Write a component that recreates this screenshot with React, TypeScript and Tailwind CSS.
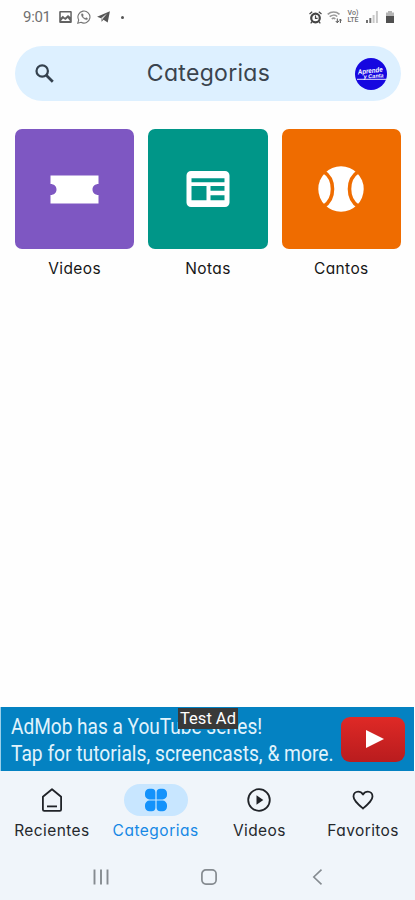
import type { ReactNode } from "react";

const categories = [
  { name: "Videos", color: "bg-[#7e57c2]", icon: <TicketIcon /> },
  { name: "Notas", color: "bg-[#009688]", icon: <NewsIcon /> },
  { name: "Cantos", color: "bg-[#ef6c00]", icon: <BallIcon /> },
];

const tabs = [
  { name: "Recientes", icon: <HomeIcon />, spacing: "tracking-[0.4px]" },
  { name: "Categorias", icon: <GridIcon />, spacing: "tracking-[0.5px]", active: true },
  { name: "Videos", icon: <PlayIcon />, spacing: "tracking-[0.4px]" },
  { name: "Favoritos", icon: <HeartIcon />, spacing: "tracking-[0.4px]" },
];

function TicketIcon() {
  return (
    <svg className="h-[29px] w-[49px]" viewBox="0 0 49 29" fill="#fff">
      <path d="M.5.5h48v8.500c-3.500 0-6 2.200-6 5.500s2.500 5.500 6 5.500v8.500H.5V20c3.500 0 6-2.200 6-5.500S4 9 .5 9z" />
    </svg>
  );
}

function NewsIcon() {
  return (
    <svg className="h-9 w-11" viewBox="0 0 44 36">
      <path
        fill="#fff"
        fillRule="evenodd"
        d="M5 0h34a4.500 4.500 0 0 1 4.500 4.500v27a4.500 4.500 0 0 1-4.500 4.500H5A4.500 4.500 0 0 1 .5 31.500v-27A4.500 4.500 0 0 1 5 0zM5.500 7.200v4h33v-4zM5.500 15v14.300h15V15zM24.500 15v4.700h14V15zM24.500 24.200v5.100h14v-5.100z"
      />
    </svg>
  );
}

function BallIcon() {
  return (
    <svg className="size-[46px]" viewBox="0 0 46 46">
      <circle cx="23" cy="23" r="22.700" fill="#fff" />
      <g fill="none" stroke="#ef6c00" strokeWidth="3.600">
        <path d="M5.500 5.500C17.500 13 17.500 33 5.500 40.500" />
        <path d="M40.500 5.500C28.500 13 28.500 33 40.500 40.500" />
      </g>
    </svg>
  );
}

function HomeIcon() {
  return (
    <svg className="size-6" viewBox="0 0 24 24" fill="none" stroke="#202328" strokeWidth="1.800" strokeLinejoin="round">
      <path d="M2.900 8.800 12 1.300l9.100 7.500v12.700a1.300 1.300 0 0 1-1.300 1.300H4.200a1.300 1.300 0 0 1-1.300-1.300z" />
      <path d="M7 18.400h10" />
    </svg>
  );
}

function GridIcon() {
  return (
    <svg className="size-6" viewBox="0 0 24 24" fill="#1492fb">
      <path d="M5.500.8h2.200a3.700 3.700 0 0 1 3.700 3.700v6.900H5.500A4.500 4.500 0 0 1 1 6.900V5.300A4.500 4.500 0 0 1 5.500.8z" />
      <path d="M18.500.8h-2.200a3.700 3.700 0 0 0-3.700 3.700v6.900h5.900A4.500 4.500 0 0 0 23 6.900V5.300A4.500 4.500 0 0 0 18.500.8z" />
      <path d="M5.500 23.200h2.200a3.700 3.700 0 0 0 3.700-3.700v-6.900H5.500A4.500 4.500 0 0 0 1 17.100v1.600a4.500 4.500 0 0 0 4.500 4.500z" />
      <path d="M18.500 23.200h-2.200a3.700 3.700 0 0 1-3.700-3.700v-6.900h5.900a4.500 4.500 0 0 1 4.500 4.500v1.600a4.500 4.500 0 0 1-4.500 4.500z" />
    </svg>
  );
}

function PlayIcon() {
  return (
    <svg className="size-6" viewBox="0 0 24 24">
      <circle cx="12" cy="12" r="10.800" fill="none" stroke="#202328" strokeWidth="1.800" />
      <path d="M9.500 7.300v9.400l6.800-4.700z" fill="#202328" />
    </svg>
  );
}

function HeartIcon() {
  return (
    <svg className="size-6" viewBox="0 0 24 24" fill="none" stroke="#202328" strokeWidth="1.800" strokeLinejoin="round">
      <path d="M12 20.500C6.500 15.600 2.500 12.200 2.500 8.400 2.500 5.500 4.700 3.600 7.100 3.600c2 0 3.700 1 4.900 2.900 1.200-1.900 2.900-2.900 4.900-2.900 2.400 0 4.600 1.900 4.600 4.800 0 3.800-4 7.200-9.500 12.100z" />
    </svg>
  );
}

function StatusBar() {
  return (
    <div className="flex h-[34px] items-center pl-[23px] pr-5 text-[#707070]">
      <span className="w-[27px] whitespace-nowrap font-['Roboto',sans-serif] text-[15px] leading-none tracking-[-0.3px]">
        9:01
      </span>
      <svg className="ml-[9px] h-3 w-[13px]" viewBox="0 0 13 12">
        <path
          fill="#626262"
          fillRule="evenodd"
          d="M1.200 0h10.600a1 1 0 0 1 1 1v10a1 1 0 0 1-1 1H1.200a1 1 0 0 1-1-1V1a1 1 0 0 1 1-1zM1.800 1.500v5.300l2-2 2.200 2 3-2.900 2.300 2.200V1.500zM2 10h9L8.700 7 6.500 9 4 7.500z"
        />
      </svg>
      <svg className="ml-[5px] size-[14px]" viewBox="0 0 14 14" fill="none" stroke="#747474">
        <path d="M.8 13.200 1.700 10A6 6 0 1 1 4 12.300z" strokeWidth="1.100" />
        <path d="M4.500 3.800c-1.200 2 2.500 6.200 5.200 6 1-.2 1.200-1.200.8-1.600L9.200 7.500l-.8.800C7.200 8 6.200 7 5.900 5.900l.6-.7-.6-1.500z" fill="#747474" strokeWidth=".2" />
      </svg>
      <svg className="ml-[6px] h-3 w-[13px]" viewBox="0 0 13 12" fill="#555">
        <path d="M12.900.2 10.700 11.500 6.500 8.700 4.600 10.700l-.6-3.500L.1 5.800z" />
        <path d="m4.100 7 6-4.400-4.400 5.400-1 2.200" fill="#d8d8d8" />
      </svg>
      <span className="ml-[11px] size-[3px] rounded-full bg-[#555]" />

      <div className="ml-auto flex items-center gap-[4px]">
        <svg className="mr-px size-[13px]" viewBox="0 0 13 13" fill="none" stroke="#454545">
          <circle cx="6.500" cy="7" r="4.300" strokeWidth="2.200" />
          <path d="M.5 3 3.200.8M12.500 3 9.800.8M6.500 4.500V7.300H8.600M3.200 10.500 1.700 12.300M9.800 10.500l1.500 1.800" strokeWidth="1.200" />
        </svg>
        <svg className="h-[13px] w-[15px]" viewBox="0 0 15 13" fill="none" stroke="#999">
          <path d="M.7 3.300c3.500-3 8.500-3 11.800 0M2.700 5.700c2.300-2 5.500-2 7.500-.2M4.800 8c1.200-1 2.500-1 3.500 0" strokeWidth="1.600" />
          <path d="M10.300 7.500v4M8.800 10l1.500 1.800L11.800 10M13.400 12V8.200M12.200 9.500l1.200-1.400 1.200 1.400" strokeWidth="1" stroke="#555" />
        </svg>
        <span className="w-[14px] text-center font-['Roboto',sans-serif] text-[7px] font-medium leading-[7px]">
          Vo)
          <br />
          LTE
        </span>
        <svg className="ml-[2px] size-3" viewBox="0 0 12 12">
          <path d="M0 9h2v3H0zM3.300 7h2v5h-2z" fill="#707070" />
          <path d="M6.600 4h2v8h-2zM9.900 0h2v12h-2z" fill="#c8c8c8" />
        </svg>
        <svg className="ml-[3px] h-3 w-[10px]" viewBox="0 0 10 12">
          <path d="M3 0h4v1.500h2v4H1v-4h2z" fill="#b5b5b5" />
          <path d="M1 5h8v7H1z" fill="#505050" />
        </svg>
      </div>
    </div>
  );
}

function Avatar() {
  return (
    <svg className="size-8" viewBox="0 0 32 32">
      <circle cx="16" cy="16" r="16" fill="#1607e0" />
      <g fill="#fff" fontFamily="Liberation Sans, sans-serif" fontStyle="italic" fontWeight="700" textAnchor="middle">
        <text x="15.500" y="15" fontSize="7" textLength="25" lengthAdjust="spacingAndGlyphs" transform="rotate(-7 16 16)">
          Aprende
        </text>
        <text x="18.500" y="20" fontSize="5.500" transform="rotate(-3 16 16)">
          y Canta
        </text>
      </g>
      <path d="M2 21.300h29" stroke="#fff" strokeWidth=".9" />
    </svg>
  );
}

function Tab({ name, icon, spacing, active }: { name: string; icon: ReactNode; spacing: string; active?: boolean }) {
  return (
    <div className="flex flex-col items-center">
      <div className={`flex h-8 w-16 items-center justify-center rounded-full ${active ? "bg-[#c8e6ff]" : ""}`}>
        {icon}
      </div>
      <span
        className={`mt-[5px] whitespace-nowrap text-[15.500px] leading-5 ${spacing} ${
          active ? "text-[#1688e5]" : "text-[#25282c]"
        }`}
      >
        {name}
      </span>
    </div>
  );
}

export default function App() {
  return (
    <div className="flex h-[900px] w-[415px] flex-col overflow-hidden bg-[#fefefe] font-['Inter',sans-serif] [font-feature-settings:'cv11'_1]">
      <StatusBar />

      <header className="ml-[15px] mr-[14px] mt-3 flex h-[55px] items-center justify-between rounded-full bg-[#ddf0ff] pl-[19px] pr-[14px]">
        <svg className="size-[22px]" viewBox="0 0 22 22" fill="none" stroke="#34414e">
          <circle cx="8.200" cy="8" r="5.700" strokeWidth="2.200" />
          <path d="m12.300 12.200 6.500 6.500" strokeWidth="2.700" />
        </svg>
        <h1 className="-mt-px ml-[6px] whitespace-nowrap text-[23px] leading-none tracking-[0.3px] text-[#3a444e]">
          Categorias
        </h1>
        <Avatar />
      </header>

      <main className="ml-[15px] mr-[14px] mt-7 grid flex-1 grid-cols-3 content-start gap-x-[14px]">
        {categories.map((category) => (
          <div key={category.name} className="flex flex-col items-center">
            <div className={`flex h-[120px] w-full items-center justify-center rounded-[7px] ${category.color}`}>
              {category.icon}
            </div>
            <span className="mt-[10px] text-[15.500px] leading-5 tracking-[0.4px] text-[#161616]">{category.name}</span>
          </div>
        ))}
      </main>

      <section className="relative mr-px flex h-16 items-center border-l border-[#9ad0ea] bg-[#0482c2] font-['Roboto',sans-serif] text-white">
        <div className="w-[340px] pl-[10px] pt-px text-[22px] leading-[27px] text-[#e1f3fc]">
          <p className="origin-left scale-x-[0.866] whitespace-nowrap">AdMob has a YouTube series!</p>
          <p className="origin-left scale-x-[0.873] whitespace-nowrap">Tap for tutorials, screencasts, &amp; more.</p>
        </div>
        <div className="flex h-[45px] w-16 items-center justify-center rounded-[9px] bg-linear-to-b from-[#df2926] to-[#b91c1e]">
          <svg className="ml-[3px] h-[18px] w-[18px]" viewBox="0 0 18 18" fill="#fff">
            <path d="M0 0v18l18-9z" />
          </svg>
        </div>
        <span className="absolute left-[177px] top-px flex h-[21px] w-[60px] items-center justify-center whitespace-nowrap bg-[#393939] pt-px text-[16.500px] leading-none">
          Test Ad
        </span>
      </section>

      <nav className="h-[129px] bg-[#f0f5fa] pt-[13px]">
        <div className="grid grid-cols-4">
          {tabs.map((tab) => (
            <Tab key={tab.name} {...tab} />
          ))}
        </div>
        <div className="mt-[28px] flex h-4 items-center pl-[93px] text-[#858b90]">
          <svg className="h-4 w-4" viewBox="0 0 16 16" stroke="currentColor" strokeWidth="1.900">
            <path d="M1.500.5v15M8 .5v15M14.500.5v15" />
          </svg>
          <svg className="ml-[92px] size-4" viewBox="0 0 16 16" fill="none" stroke="currentColor" strokeWidth="1.700">
            <rect x=".9" y=".9" width="14.200" height="14.200" rx="4" />
          </svg>
          <svg className="ml-[95px] h-4 w-[11px]" viewBox="0 0 11 16" fill="none" stroke="currentColor" strokeWidth="1.600">
            <path d="M9.500.7 1.800 8l7.700 7.300" />
          </svg>
        </div>
      </nav>
    </div>
  );
}
